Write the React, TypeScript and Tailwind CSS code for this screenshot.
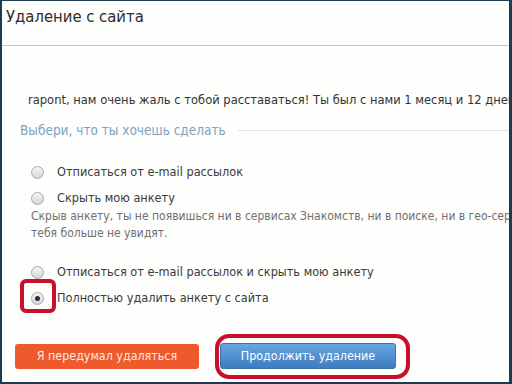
import React from 'react';

const font = { fontFamily: '"DejaVu Sans Condensed", "DejaVu Sans", Verdana, sans-serif', fontStretch: 'condensed' };

const Radio: React.FC<{ checked?: boolean }> = ({ checked }) => (
  <span className="relative inline-flex w-[13px] h-[13px] shrink-0 items-center justify-center rounded-full border border-[#a9a9a9] bg-gradient-to-b from-[#f4f4f4] to-[#d6d6d6]">
    {checked && <span className="w-[5px] h-[5px] rounded-full bg-[#1f3557]" />}
  </span>
);

const Option: React.FC<{ label: string; checked?: boolean }> = ({ label, checked }) => (
  <div className="flex items-center gap-[13px] pl-[29px] h-[26px]">
    <Radio checked={checked} />
    <span className="text-[12.6px] text-[#3a3a3a] whitespace-nowrap">{label}</span>
  </div>
);

export default function App() {
  return (
    <div
      className="relative w-[512px] h-[384px] overflow-hidden bg-[#fefefc] border-l-2 border-t border-r-[3px] border-b-2 border-[#1d3b53]"
      style={font}
    >
      <h1 className="px-[4px] pt-[3px] h-[45px] text-[16.5px] leading-[26px] text-[#2d2d2d] font-normal border-b border-[#c6c6c6]">
        Удаление с сайта
      </h1>

      <p className="mt-[45px] pl-[26px] text-[12.8px] leading-[18px] text-[#333] whitespace-nowrap">
        rapont, нам очень жаль с тобой расставаться! Ты был с нами 1 месяц и 12 дней
      </p>

      <div className="flex items-center gap-[12px] pl-[18px] mt-[12px]">
        <span className="text-[13.5px] leading-[18px] text-[#7ea2c0] whitespace-nowrap">Выбери, что ты хочешь сделать</span>
        <span className="flex-1 h-px bg-[#e2e2e2]" />
      </div>

      <div className="mt-[20px]">
        <Option label="Отписаться от e-mail рассылок" />
        <Option label="Скрыть мою анкету" />
        <p className="-mt-[3px] pl-[29px] text-[12px] leading-[17px] text-[#707070] whitespace-nowrap">
          Скрыв анкету, ты не появишься ни в сервисах Знакомств, ни в поиске, ни в гео-сервисах, и
          <br />
          тебя больше не увидят.
        </p>
        <div className="mt-[17px]">
          <Option label="Отписаться от e-mail рассылок и скрыть мою анкету" />
          <Option label="Полностью удалить анкету с сайта" checked />
        </div>
      </div>

      <div className="flex items-center gap-[21px] pl-[13px] mt-[32px]">
        <button className="w-[184px] h-[25px] rounded-[3px] bg-[#ee5a2b] text-[12.4px] text-[#fbe9e2]" style={font}>
          Я передумал удаляться
        </button>
        <button
          className="w-[176px] h-[26px] rounded-[3px] bg-gradient-to-b from-[#67a6e2] to-[#3c7cc0] text-[12.4px] text-white border border-[#3a72ad]"
          style={font}
        >
          Продолжить удаление
        </button>
      </div>

      <div className="absolute left-[18px] top-[278px] w-[36px] h-[34px] rounded-[6px] border-[4px] border-[#c8102e]" />
      <div className="absolute left-[213px] top-[333px] w-[195px] h-[45px] rounded-[14px] border-[4px] border-[#c8102e]" />
    </div>
  );
}
